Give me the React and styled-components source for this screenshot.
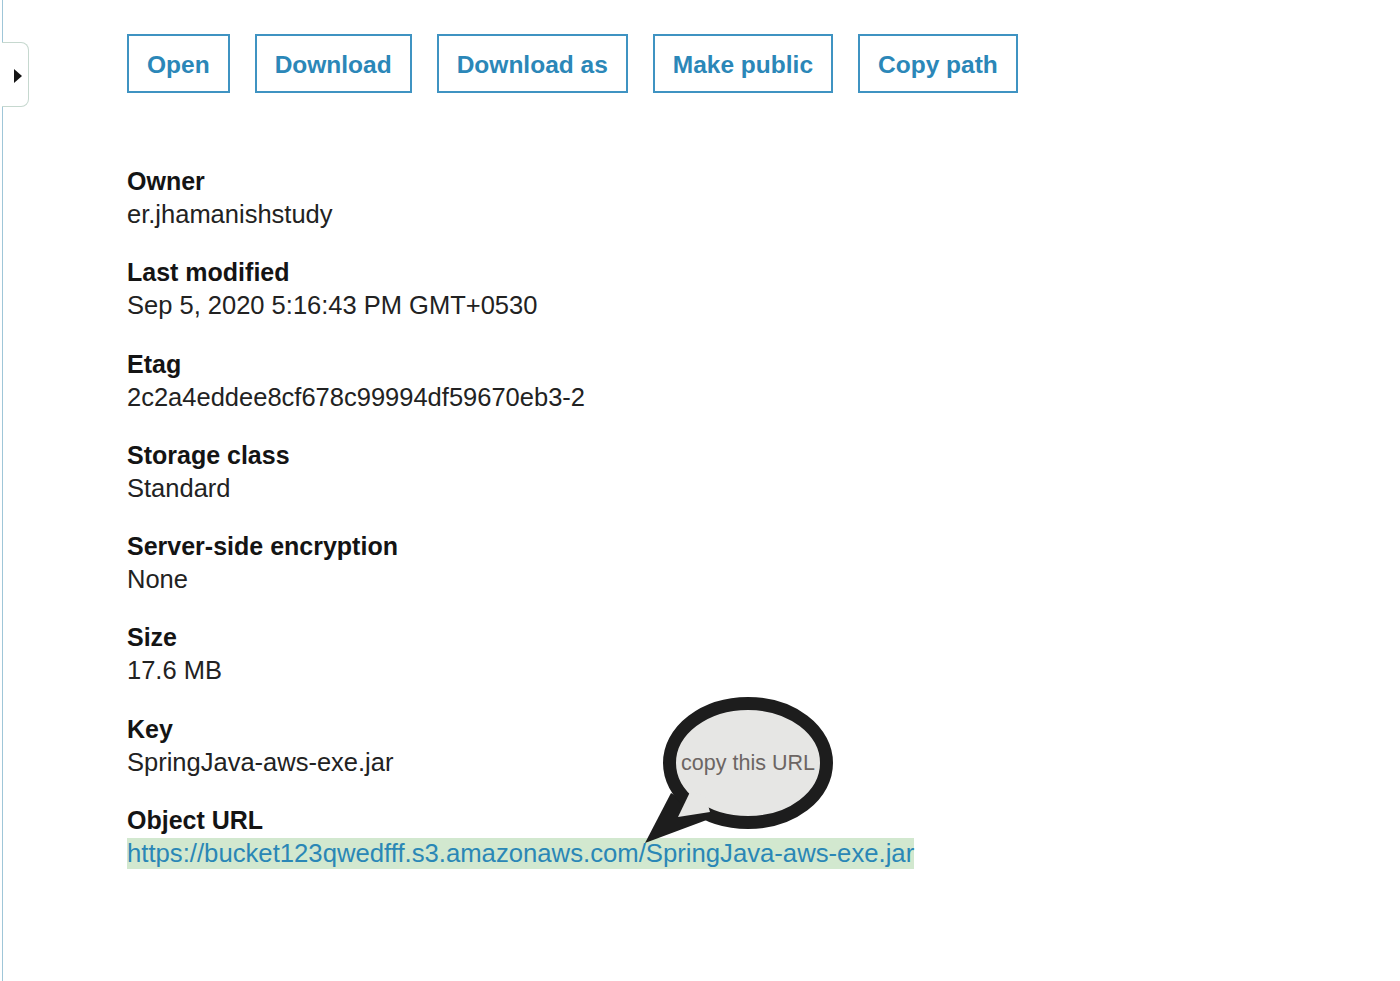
import React from "react";
import styled, { createGlobalStyle } from "styled-components";

const GlobalStyle = createGlobalStyle`
    html, body {
        margin: 0;
        padding: 0;
        background: #ffffff;
    }
    body {
        font-family: "Liberation Sans", Arial, sans-serif;
        color: #1b1b1b;
    }
`;

const details = [
    { label: "Owner", value: "er.jhamanishstudy" },
    { label: "Last modified", value: "Sep 5, 2020 5:16:43 PM GMT+0530" },
    { label: "Etag", value: "2c2a4eddee8cf678c99994df59670eb3-2" },
    { label: "Storage class", value: "Standard" },
    { label: "Server-side encryption", value: "None" },
    { label: "Size", value: "17.6 MB" },
    { label: "Key", value: "SpringJava-aws-exe.jar" },
];

const actions = ["Open", "Download", "Download as", "Make public", "Copy path"];

const SpeechBubble = () => (
    <Bubble>
        <svg width="200" height="160" viewBox="0 0 200 160">
            <polygon points="31,103 5,153 72,128" fill="#1d1d1d" />
            <ellipse cx="108" cy="73" rx="78.5" ry="59.5" fill="#e6e6e4" stroke="#1d1d1d" strokeWidth="13" />
            <polygon points="51,100 38,127 70,122 66,108" fill="#e6e6e4" />
        </svg>
        <BubbleText>copy this URL</BubbleText>
    </Bubble>
);

const App = () => {
    return (
        <>
            <GlobalStyle />
            <Page>
                <Sidebar>
                    <div className="rail rail--top" />
                    <div className="tab">
                        <span className="arrow" />
                    </div>
                    <div className="rail rail--fill" />
                </Sidebar>
                <Main>
                    <Toolbar>
                        {actions.map(a => (
                            <ActionButton key={a}>{a}</ActionButton>
                        ))}
                    </Toolbar>
                    <Details>
                        {details.map(d => (
                            <Section key={d.label}>
                                <Label>{d.label}</Label>
                                <Value>{d.value}</Value>
                            </Section>
                        ))}
                        <Section>
                            <Label>Object URL</Label>
                            <Value>
                                <UrlLink href="#">
                                    https://bucket123qwedfff.s3.amazonaws.com/SpringJava-aws-exe.jar
                                </UrlLink>
                            </Value>
                        </Section>
                        <SpeechBubble />
                    </Details>
                </Main>
            </Page>
        </>
    );
};

export default App;

const Page = styled.div`
    display: flex;
    min-height: 100vh;
`;

const Sidebar = styled.div`
    display: flex;
    flex-direction: column;
    width: 27px;
    margin-left: 2px;

    .rail {
        border-left: 1px solid #9fc6d8;
    }
    .rail--top {
        height: 42px;
    }
    .rail--fill {
        flex: 1;
    }
    .tab {
        box-sizing: border-box;
        height: 65px;
        border: 1px solid #c6d8cf;
        border-left: none;
        border-radius: 0 8px 8px 0;
        display: flex;
        align-items: center;
        padding-left: 12px;
        padding-top: 2px;
    }
    .arrow {
        width: 0;
        height: 0;
        border-top: 7px solid transparent;
        border-bottom: 7px solid transparent;
        border-left: 8px solid #151515;
    }
`;

const Main = styled.div`
    flex: 1;
    padding: 34px 0 0 98px;
`;

const Toolbar = styled.div`
    display: flex;
    gap: 25px;
`;

const ActionButton = styled.button`
    height: 59px;
    padding: 3px 18px 0;
    background: #ffffff;
    border: 2px solid #3f93c2;
    color: #2b87b8;
    font-family: "Liberation Sans", Arial, sans-serif;
    font-size: 24.5px;
    font-weight: bold;
    cursor: pointer;
`;

const Details = styled.div`
    position: relative;
    margin-top: 72px;
`;

const Section = styled.div`
    margin-bottom: 25.3px;
    font-size: 25.5px;
    line-height: 33px;
`;

const Label = styled.div`
    font-size: 25px;
    font-weight: bold;
    color: #141414;
`;

const Value = styled.div`
    color: #222222;
`;

const UrlLink = styled.a`
    display: inline-block;
    font-size: 25.7px;
    line-height: 31px;
    margin-top: 1px;
    background: #d2e8cf;
    color: #2a87b6;
    text-decoration: none;
`;

const Bubble = styled.div`
    position: absolute;
    left: 513px;
    top: 525px;
    width: 200px;
    height: 160px;

    svg {
        display: block;
    }
`;

const BubbleText = styled.span`
    position: absolute;
    left: 108px;
    top: 73px;
    transform: translate(-50%, -50%);
    white-space: nowrap;
    font-size: 21.5px;
    color: #6c6563;
`;
